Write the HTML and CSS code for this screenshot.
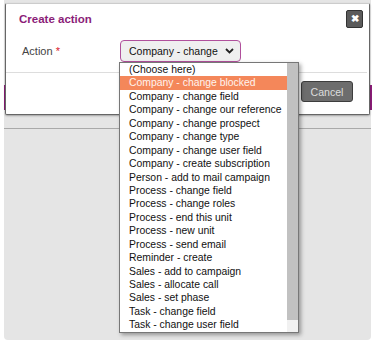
FILE: index.html
```html
<!DOCTYPE html>
<html lang="en">
<head>
  <meta charset="UTF-8" />
  <title>Create action</title>
  <link rel="stylesheet" href="styles.css">
</head>
<body>
  <div class="page">
    <div class="page-top">
      <div class="purple-bar"></div>
    </div>
  </div>

  <div class="dialog">
    <div class="dialog-head">
      <h2>Create action</h2>
      <span class="close">&#10006;</span>
    </div>
    <div class="dialog-body">
      <label>Action <span class="req">*</span></label>
      <div class="select">
        <span>Company - change</span>
        <svg width="9" height="6" viewBox="0 0 9 6"><path d="M1 1 L4.5 4.5 L8 1" fill="none" stroke="#222" stroke-width="1.8"/></svg>
      </div>
    </div>
    <div class="dialog-foot">
      <button class="cancel">Cancel</button>
    </div>
  </div>

  <div class="listbox">
    <ul class="options">
      <li>(Choose here)</li>
      <li class="active">Company - change blocked</li>
      <li>Company - change field</li>
      <li>Company - change our reference</li>
      <li>Company - change prospect</li>
      <li>Company - change type</li>
      <li>Company - change user field</li>
      <li>Company - create subscription</li>
      <li>Person - add to mail campaign</li>
      <li>Process - change field</li>
      <li>Process - change roles</li>
      <li>Process - end this unit</li>
      <li>Process - new unit</li>
      <li>Process - send email</li>
      <li>Reminder - create</li>
      <li>Sales - add to campaign</li>
      <li>Sales - allocate call</li>
      <li>Sales - set phase</li>
      <li>Task - change field</li>
      <li>Task - change user field</li>
    </ul>
    <div class="scrollbar"><div class="thumb"></div></div>
  </div>
</body>
</html>
```

FILE: styles.css
```css
body {
  margin: 0;
  background: #fff;
  font-family: "Liberation Sans", Arial, sans-serif;
}

.page {
  margin: 0 5px 0 4px;
  height: 340px;
  background: #e5e5e5;
  border-radius: 0 0 4px 4px;
}

.page-top {
  height: 129px;
  padding-top: 85px;
  box-sizing: border-box;
  border-bottom: 1px solid #a9a9a9;
}

.purple-bar {
  height: 25px;
  margin-right: -1px;
  background: #8b1d78;
}

.dialog {
  position: absolute;
  left: 5px;
  top: 3px;
  width: 363px;
  height: 110px;
  background: #fff;
  border: 1px solid #666;
  border-top-color: #ccc;
  border-radius: 2px;
  box-shadow: 0 1px 2px rgba(0,0,0,0.3);
}

.dialog-head {
  display: flex;
  align-items: center;
  justify-content: space-between;
  padding: 6px 6px 0 13px;
  height: 17px;
}

.dialog-head h2 {
  margin: 0;
  font-size: 11.5px;
  font-weight: bold;
  color: #8b1d78;
}

.close {
  display: flex;
  align-items: center;
  justify-content: center;
  width: 15px;
  height: 16px;
  background: #5b5b5b;
  border: 1px solid #333;
  border-radius: 2px;
  color: #fff;
  font-size: 10px;
  font-weight: bold;
}

.dialog-body {
  display: flex;
  align-items: center;
  height: 22px;
  margin-top: 13px;
  padding-left: 16px;
  padding-bottom: 10px;
  margin-right: 2px;
  border-bottom: 1px solid #ddd;
}

.dialog-body label {
  width: 98px;
  font-size: 11px;
  color: #444;
}

.req {
  color: #d9182d;
}

.select {
  display: flex;
  align-items: center;
  justify-content: space-between;
  box-sizing: border-box;
  width: 121px;
  height: 22px;
  padding: 0 6px 0 8px;
  background: #efefef;
  border: 1px solid #b0509c;
  border-radius: 4px;
  font-size: 10.5px;
  color: #111;
}

.dialog-foot {
  display: flex;
  justify-content: flex-end;
  padding: 8px 16px 0 0;
}

.cancel {
  width: 52px;
  height: 21px;
  padding: 0;
  background: #6d6d6d;
  border: 1px solid #3d3d3d;
  border-radius: 3px;
  color: #ddd;
  font-family: "Liberation Sans", Arial, sans-serif;
  font-size: 10.6px;
}

.listbox {
  position: absolute;
  left: 119px;
  top: 62px;
  width: 178px;
  height: 269px;
  display: flex;
  background: #fff;
  border: 1px solid #777;
  box-shadow: 2px 2px 4px rgba(0,0,0,0.35);
}

.options {
  flex: 1;
  margin: 0;
  padding: 0;
  list-style: none;
  font-size: 10.4px;
  color: #111;
}

.options li {
  height: 13.45px;
  line-height: 13.45px;
  padding-left: 9px;
  white-space: nowrap;
}

.options li.active {
  background: #f4875a;
  color: #fff3ee;
}

.scrollbar {
  width: 11px;
  background: #f1f1f1;
}

.thumb {
  height: 257px;
  background: #c1c1c1;
}
```
